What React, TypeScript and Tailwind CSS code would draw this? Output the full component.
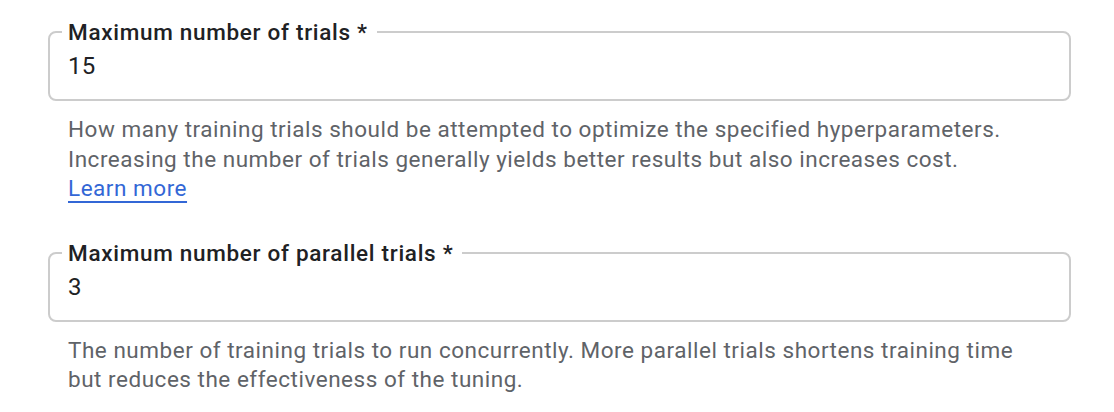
import React from "react";

type Field = {
  label: string;
  value: string;
  hint: string[];
  learnMore?: boolean;
};

const fields: Field[] = [
  {
    label: "Maximum number of trials *",
    value: "15",
    hint: [
      "How many training trials should be attempted to optimize the specified hyperparameters.",
      "Increasing the number of trials generally yields better results but also increases cost.",
    ],
    learnMore: true,
  },
  {
    label: "Maximum number of parallel trials *",
    value: "3",
    hint: [
      "The number of training trials to run concurrently. More parallel trials shortens training time",
      "but reduces the effectiveness of the tuning.",
    ],
  },
];

export default function App() {
  return (
    <div className="min-h-[412px] w-[1114px] bg-white pl-12 pt-[31px] font-['Roboto',sans-serif]">
      <div className="flex w-[1023px] flex-col gap-[48px]">
        {fields.map((f) => (
          <OutlinedField key={f.label} field={f} />
        ))}
      </div>
    </div>
  );
}

function OutlinedField({ field }: { field: Field }) {
  return (
    <div>
      <div className="relative h-[70px] rounded-[8px] border-2 border-[#cccccc] pl-[18px] pt-[17px]">
        {/* notched label */}
        <span className="absolute -top-[17px] left-[12px] bg-white pl-[6px] pr-[9px] text-[22.5px] font-medium leading-[32px] tracking-[0.7px] text-[#202124]">
          {field.label}
        </span>
        <p className="text-[24px] leading-[32px] tracking-[0.3px] text-[#202124]">{field.value}</p>
      </div>
      <div className="mt-[14px] pl-5 text-[22.5px] leading-[29.5px] tracking-[0.52px] text-[#5f6368]">
        {field.hint.map((line) => (
          <p key={line} className="whitespace-nowrap">
            {line}
          </p>
        ))}
        {field.learnMore && (
          <a className="text-[#3367d6] underline decoration-2 underline-offset-[5px]">
            Learn more
          </a>
        )}
      </div>
    </div>
  );
}
